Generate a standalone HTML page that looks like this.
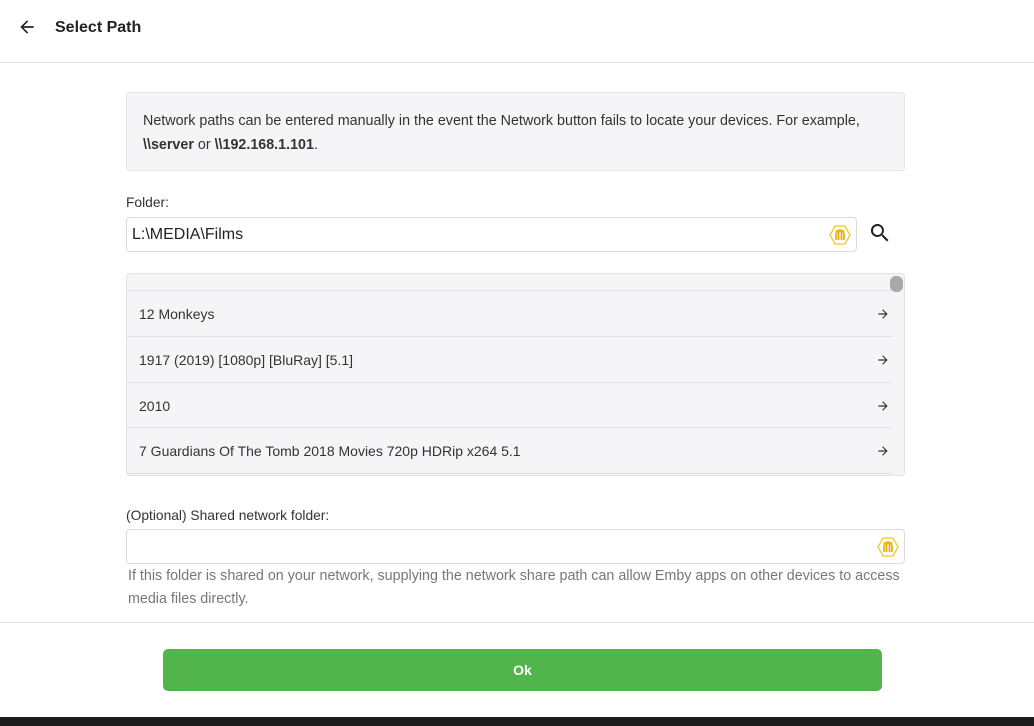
<!DOCTYPE html>
<html><head><meta charset="utf-8"><style>
*{box-sizing:border-box;margin:0;padding:0}
body{width:1034px;height:726px;background:#fff;font-family:"Liberation Sans",sans-serif;color:#222;position:relative;overflow:hidden}
.hdr{position:absolute;left:0;top:0;width:1034px;height:63px;border-bottom:1px solid #e4e4e4}
.hdr .t{position:absolute;left:55px;top:19px;font-size:16px;font-weight:bold;color:#222}
.info{position:absolute;left:126px;top:92px;width:779px;height:79px;background:#f5f5f7;border:1px solid #e6e6e8;border-radius:3px;padding:16px 16px;font-size:14.3px;line-height:24px;color:#333;white-space:nowrap}
.lbl{position:absolute;left:126px;font-size:13.8px;color:#333}
.inp{position:absolute;left:126px;height:35px;border:1px solid #dcdcdc;border-radius:4px;background:#fff}
.list{position:absolute;left:126px;top:273px;width:779px;height:203px;background:#f5f5f7;border:1px solid #e2e2e4;border-radius:4px;overflow:hidden}
.row{position:absolute;left:0;width:765px;height:46px;border-top:1px solid #e2e2e4;font-size:14px;color:#333;padding:15px 12px}
.row svg{position:absolute;right:2px;top:16px}
.help{position:absolute;left:128px;top:565px;width:800px;font-size:14.3px;line-height:23px;color:#777;white-space:nowrap}
.foot{position:absolute;left:0;top:622px;width:1034px;height:1px;background:#e4e4e4}
.btn{position:absolute;left:163px;top:649px;width:719px;height:42px;background:#52b54b;border-radius:5px;color:#fff;font-weight:bold;font-size:14px;text-align:center;line-height:42px}
.dark{position:absolute;left:0;top:717px;width:1034px;height:9px;background:#1c1c1c}
</style></head><body>
<div class="hdr">
<svg style="position:absolute;left:17px;top:17px" width="20" height="20" viewBox="0 0 24 24"><path d="M20 11H7.8l5.6-5.6L12 4l-8 8 8 8 1.4-1.4L7.8 13H20z" fill="#222"/></svg>
<div class="t">Select Path</div>
</div>
<div class="info">Network paths can be entered manually in the event the Network button fails to locate your devices. For example,<br><b>\\server</b> or <b>\\192.168.1.101</b>.</div>
<div class="lbl" style="top:195px">Folder:</div>
<div class="inp" style="top:217px;width:731px;padding:8px 5px;font-size:16px;color:#222">L:\MEDIA\Films
<svg style="position:absolute;right:5px;top:6px" width="22" height="22" viewBox="0 0 22 22"><polygon points="6,2 16,2 21,11 16,20 6,20 1,11" fill="none" stroke="#f5c518" stroke-width="1.2"/><g fill="none" stroke="#e9a800" stroke-width="1.6"><path d="M7 16V9M9.5 16V8M12.5 16V8M15 16V9"/></g><circle cx="8.2" cy="7.5" r="1.5" fill="#e9a800"/><circle cx="11" cy="6.5" r="1.5" fill="#e9a800"/><circle cx="13.8" cy="7.5" r="1.5" fill="#e9a800"/></svg></div>
<svg style="position:absolute;left:868px;top:221px" width="24" height="24" viewBox="0 0 24 24"><path d="M15.5 14h-.8l-.3-.3A6.5 6.5 0 1 0 9.5 16a6.5 6.5 0 0 0 4.2-1.6l.3.3v.8l5 5 1.5-1.5-5-5zm-6 0C7 14 5 12 5 9.5S7 5 9.5 5 14 7 14 9.5 12 14 9.5 14z" fill="#222"/></svg>
<div class="list">
<div style="position:absolute;right:1px;top:2px;width:13px;height:16px;border-radius:6px;background:#a9a9a9"></div>
<div class="row" style="top:16px">12 Monkeys<svg width="14" height="14" viewBox="0 0 24 24"><path d="M12 4l-1.4 1.4 5.6 5.6H4v2h12.2l-5.6 5.6L12 20l8-8z" fill="#333"/></svg></div>
<div class="row" style="top:62px">1917 (2019) [1080p] [BluRay] [5.1]<svg width="14" height="14" viewBox="0 0 24 24"><path d="M12 4l-1.4 1.4 5.6 5.6H4v2h12.2l-5.6 5.6L12 20l8-8z" fill="#333"/></svg></div>
<div class="row" style="top:108px">2010<svg width="14" height="14" viewBox="0 0 24 24"><path d="M12 4l-1.4 1.4 5.6 5.6H4v2h12.2l-5.6 5.6L12 20l8-8z" fill="#333"/></svg></div>
<div class="row" style="top:153px">7 Guardians Of The Tomb 2018 Movies 720p HDRip x264 5.1<svg width="14" height="14" viewBox="0 0 24 24"><path d="M12 4l-1.4 1.4 5.6 5.6H4v2h12.2l-5.6 5.6L12 20l8-8z" fill="#333"/></svg></div>
<div class="row" style="top:199px"></div>
</div>
<div class="lbl" style="top:508px">(Optional) Shared network folder:</div>
<div class="inp" style="top:529px;width:779px">
<svg style="position:absolute;right:5px;top:6px" width="22" height="22" viewBox="0 0 22 22"><polygon points="6,2 16,2 21,11 16,20 6,20 1,11" fill="none" stroke="#f5c518" stroke-width="1.2"/><g fill="none" stroke="#e9a800" stroke-width="1.6"><path d="M7 16V9M9.5 16V8M12.5 16V8M15 16V9"/></g><circle cx="8.2" cy="7.5" r="1.5" fill="#e9a800"/><circle cx="11" cy="6.5" r="1.5" fill="#e9a800"/><circle cx="13.8" cy="7.5" r="1.5" fill="#e9a800"/></svg></div>
<div class="help">If this folder is shared on your network, supplying the network share path can allow Emby apps on other devices to access<br>media files directly.</div>
<div class="foot"></div>
<div class="btn">Ok</div>
<div class="dark"></div>
</body></html>
